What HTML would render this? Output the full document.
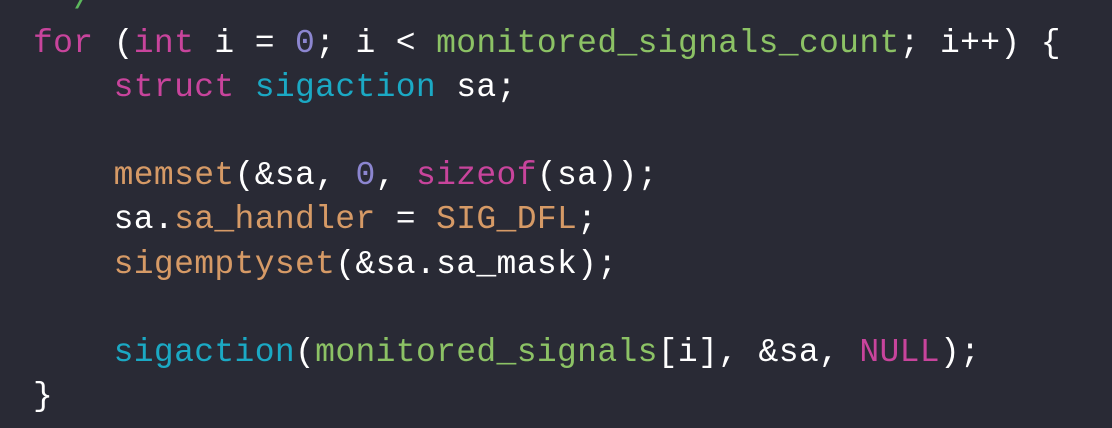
<!DOCTYPE html>
<html><head><meta charset="utf-8"><style>
html,body{margin:0;padding:0;background:#292a35;width:1112px;height:428px;overflow:hidden}
pre{position:absolute;left:33px;top:-22px;margin:0;font-family:"Liberation Mono",monospace;font-size:33px;letter-spacing:0.35px;line-height:44.1px;color:#ffffff}
.k{color:#c8449c}.t{color:#1ba9c4}.g{color:#8cc265}.n{color:#8c86d0}.o{color:#d69a66}.c{color:#5cb85c}
</style></head><body>
<pre><span class="c"> */</span>
<span class="k">for</span> (<span class="k">int</span> i = <span class="n">0</span>; i &lt; <span class="g">monitored_signals_count</span>; i++) {
    <span class="k">struct</span> <span class="t">sigaction</span> sa;

    <span class="o">memset</span>(&amp;sa, <span class="n">0</span>, <span class="k">sizeof</span>(sa));
    sa.<span class="o">sa_handler</span> = <span class="o">SIG_DFL</span>;
    <span class="o">sigemptyset</span>(&amp;sa.sa_mask);

    <span class="t">sigaction</span>(<span class="g">monitored_signals</span>[i], &amp;sa, <span class="k">NULL</span>);
}</pre>
</body></html>
